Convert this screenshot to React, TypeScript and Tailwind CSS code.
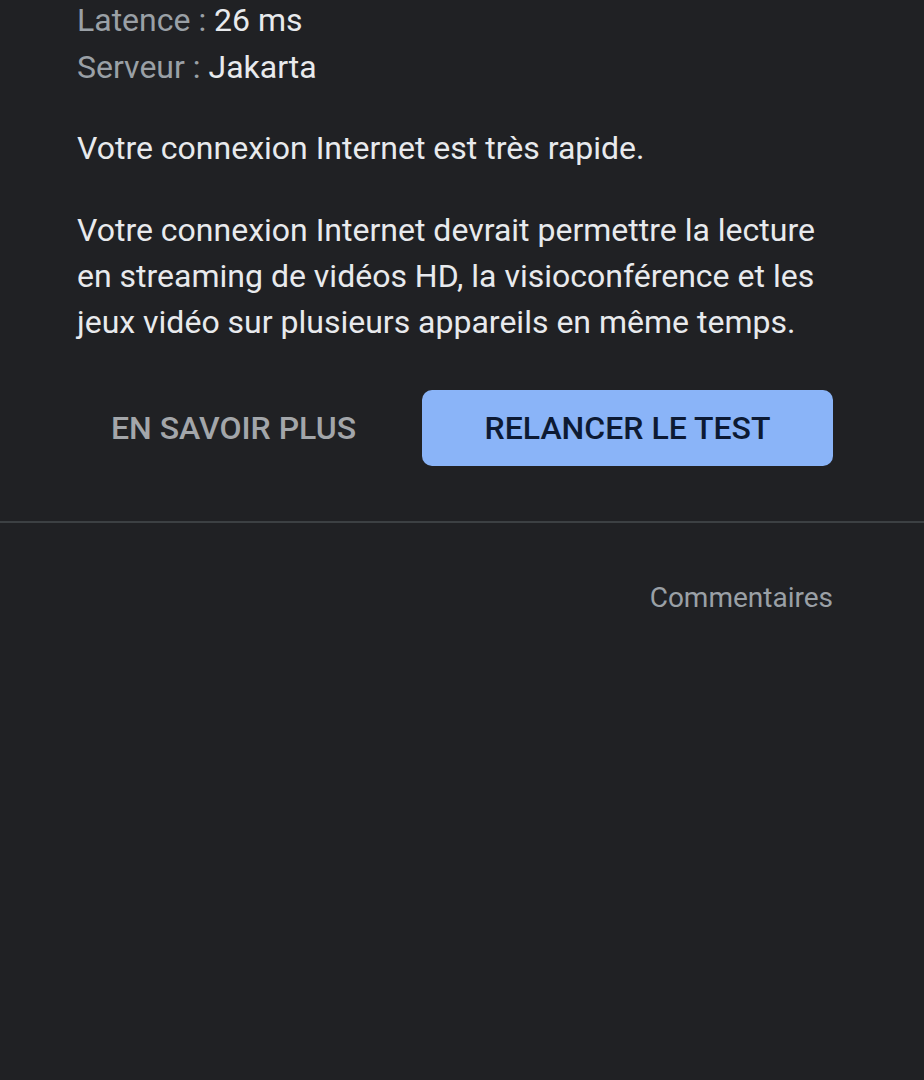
export default function App() {
  return (
    <div
      className="w-[924px] h-[1080px] bg-[#202124] overflow-hidden"
      style={{ fontFamily: "Roboto, 'Noto Sans', sans-serif" }}
    >
      <div className="pl-[77px] pr-[91px] pt-0 -mt-[3px]">
        <div className="text-[32px] leading-[47px]">
          <div>
            <span className="text-[#9aa0a6]">Latence : </span>
            <span className="text-[#e8eaed]">26 ms</span>
          </div>
          <div>
            <span className="text-[#9aa0a6]">Serveur : </span>
            <span className="text-[#e8eaed]">Jakarta</span>
          </div>
        </div>
        <p className="mt-[34px] text-[32px] leading-[46px] text-[#e8eaed]">
          Votre connexion Internet est très rapide.
        </p>
        <p className="mt-[36px] text-[32px] leading-[46px] text-[#e8eaed]">
          Votre connexion Internet devrait permettre la lecture en streaming de vidéos HD, la visioconférence et les jeux vidéo sur plusieurs appareils en même temps.
        </p>
        <div className="mt-[45px] flex items-center">
          <button className="w-[345px] h-[76px] text-[32px] font-medium text-[#a3a6aa] text-left pl-[34px]">
            EN SAVOIR PLUS
          </button>
          <button className="w-[411px] h-[76px] rounded-[10px] bg-[#8ab4f8] text-[32px] font-medium text-[#0d1a33]">
            RELANCER LE TEST
          </button>
        </div>
      </div>
      <div className="mt-[55px] h-[2px] bg-[#3c4043]" />
      <div className="pr-[91px] mt-[58px] flex justify-end">
        <span className="text-[28px] leading-[34px] text-[#9aa0a6]">Commentaires</span>
      </div>
    </div>
  );
}
